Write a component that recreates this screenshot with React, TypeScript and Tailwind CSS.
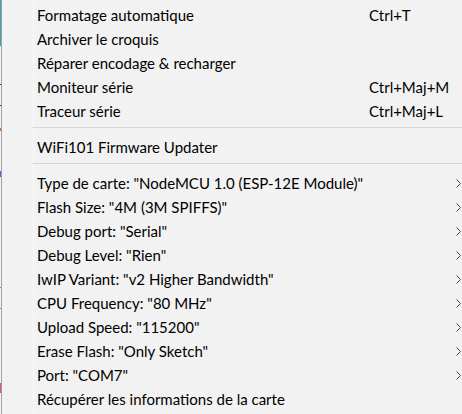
const top = [
  { label: 'Formatage automatique', shortcut: 'Ctrl+T' },
  { label: 'Archiver le croquis' },
  { label: 'Réparer encodage & recharger' },
  { label: 'Moniteur série', shortcut: 'Ctrl+Maj+M' },
  { label: 'Traceur série', shortcut: 'Ctrl+Maj+L' },
]

const board = [
  { label: 'Type de carte: "NodeMCU 1.0 (ESP-12E Module)"', sub: true },
  { label: 'Flash Size: "4M (3M SPIFFS)"', sub: true },
  { label: 'Debug port: "Serial"', sub: true },
  { label: 'Debug Level: "Rien"', sub: true },
  { label: 'IwIP Variant: "v2 Higher Bandwidth"', sub: true },
  { label: 'CPU Frequency: "80 MHz"', sub: true },
  { label: 'Upload Speed: "115200"', sub: true },
  { label: 'Erase Flash: "Only Sketch"', sub: true },
  { label: 'Port: "COM7"', sub: true },
  { label: 'Récupérer les informations de la carte' },
]

type Item = { label: string; shortcut?: string; sub?: boolean }

function Chevron() {
  return (
    <svg width="5" height="9" viewBox="0 0 5 9" className="shrink-0">
      <path d="M0.5 0.5 L4.5 4.5 L0.5 8.5" fill="none" stroke="#4a4a4a" strokeWidth="1" />
    </svg>
  )
}

function Row({ item }: { item: Item }) {
  return (
    <div className="grid h-6 grid-cols-[332px_1fr_auto] items-center pl-[35px] pr-px leading-none">
      <span className="whitespace-nowrap">{item.label}</span>
      <span className="whitespace-nowrap">{item.shortcut}</span>
      {item.sub ? <Chevron /> : <span />}
    </div>
  )
}

function Separator() {
  return (
    <div className="h-3 pl-[31px] pt-1">
      <div className="h-px bg-[#d7d7d7]" />
    </div>
  )
}

export default function App() {
  return (
    <div
      className="flex h-[414px] w-[462px] overflow-hidden text-[15px] text-black"
      style={{ fontFamily: '"Segoe UI", Lato, sans-serif' }}
    >
      {/* bit of the sketch window showing behind the menu */}
      <div className="flex w-px flex-col bg-[#f4f4f4]">
        <div className="h-[46px] bg-[#3aa6a8]" />
        <div className="mt-[38px] h-px bg-[#333]" />
        <div className="mt-[20px] h-px bg-[#333]" />
        <div className="mt-[22px] h-[3px] bg-[#e07020]" />
        <div className="mt-[40px] h-[6px] bg-[#6060c0]" />
        <div className="mt-[110px] h-px bg-[#e07020]" />
        <div className="mt-[20px] h-px bg-[#e07020]" />
        <div className="mt-[74px] h-[10px] bg-[#e05080]" />
      </div>
      <div className="w-px bg-[#a0a0a0]" />
      <div className="relative flex-1 bg-[#f2f2f2] pt-[3px]">
        <div className="absolute inset-y-0 left-[31px] w-px bg-[#f8f8f8]" />
        <div className="relative">
          {top.map((it) => (
            <Row key={it.label} item={it} />
          ))}
          <Separator />
          <Row item={{ label: 'WiFi101 Firmware Updater' }} />
          <Separator />
          {board.map((it) => (
            <Row key={it.label} item={it} />
          ))}
        </div>
      </div>
    </div>
  )
}
